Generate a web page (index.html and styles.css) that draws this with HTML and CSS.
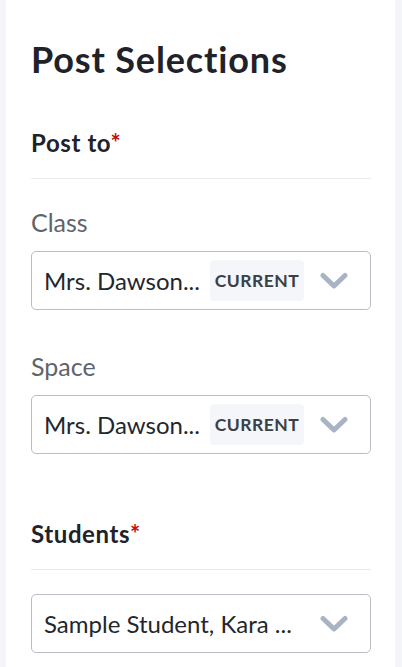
FILE: index.html
```html
<!DOCTYPE html>
<html lang="en">
<head>
<meta charset="utf-8">
<title>Post Selections</title>
<link rel="stylesheet" href="styles.css">
</head>
<body>
<main class="panel">
  <h1 class="title">Post Selections</h1>

  <section class="group">
    <h2 class="group-title">Post to<span class="req">*</span></h2>
    <hr class="divider">
    <div class="field">
      <div class="label">Class</div>
      <div class="select">
        <span class="select-value">Mrs. Dawson...</span>
        <span class="badge">CURRENT</span>
        <svg class="chev" viewBox="0 0 28 18" width="28" height="18" aria-hidden="true"><path d="M3 3.5 L14 14 L25 3.5" fill="none" stroke="#a8b3c4" stroke-width="5" stroke-linecap="round" stroke-linejoin="round"/></svg>
      </div>
    </div>
    <div class="field">
      <div class="label">Space</div>
      <div class="select">
        <span class="select-value">Mrs. Dawson...</span>
        <span class="badge">CURRENT</span>
        <svg class="chev" viewBox="0 0 28 18" width="28" height="18" aria-hidden="true"><path d="M3 3.5 L14 14 L25 3.5" fill="none" stroke="#a8b3c4" stroke-width="5" stroke-linecap="round" stroke-linejoin="round"/></svg>
      </div>
    </div>
  </section>

  <section class="group group-students">
    <h2 class="group-title">Students<span class="req">*</span></h2>
    <hr class="divider">
    <div class="select">
      <span class="select-value">Sample Student, Kara ...</span>
      <svg class="chev" viewBox="0 0 28 18" width="28" height="18" aria-hidden="true"><path d="M3 3.5 L14 14 L25 3.5" fill="none" stroke="#a8b3c4" stroke-width="5" stroke-linecap="round" stroke-linejoin="round"/></svg>
    </div>
  </section>
</main>
</body>
</html>
```

FILE: styles.css
```css
* { box-sizing: border-box; }
html, body { margin: 0; padding: 0; }
body {
  background: #f4f5f8;
  font-family: Lato, "Noto Sans", sans-serif;
  color: #1f2329;
  height: 667px;
  overflow: hidden;
}
.panel {
  background: #ffffff;
  margin: 0 7px 0 6px;
  padding: 37px 24px 0 25px;
  min-height: 667px;
}
.title {
  margin: 0;
  font-size: 36px;
  line-height: 44px;
  font-weight: 700;
  color: #1f2329;
  letter-spacing: 0.85px;
}
.group { margin-top: 47px; }
.group-students { margin-top: 65px; }
.group-title {
  margin: 0;
  font-size: 24px;
  line-height: 30px;
  font-weight: 700;
  color: #1f2329;
  letter-spacing: 0.6px;
}
.req { color: #c40a0a; }
.divider {
  border: 0;
  border-top: 1px solid #e7eaee;
  margin: 20px 0 0;
}
.field { margin-top: 28px; }
.field + .field { margin-top: 41px; }
.label {
  font-size: 25px;
  line-height: 30px;
  font-weight: 400;
  color: #5e646b;
  margin-bottom: 14px;
}
.select {
  height: 59px;
  border: 1px solid #b9bec6;
  border-radius: 5px;
  display: flex;
  align-items: center;
  padding: 0 22px 0 12px;
}
.group-students .select { margin-top: 24px; }
.select-value {
  font-size: 24px;
  color: #23272d;
  flex: 1 1 auto;
  white-space: nowrap;
  overflow: hidden;
}
.badge {
  background: #f4f6f9;
  border-radius: 4px;
  height: 41px;
  width: 94px;
  display: flex;
  align-items: center;
  justify-content: center;
  font-size: 17.5px;
  font-weight: 700;
  letter-spacing: 0.5px;
  color: #38404a;
  margin-right: 16px;
  flex: 0 0 auto;
}
.chev { flex: 0 0 auto; display: block; }
```
